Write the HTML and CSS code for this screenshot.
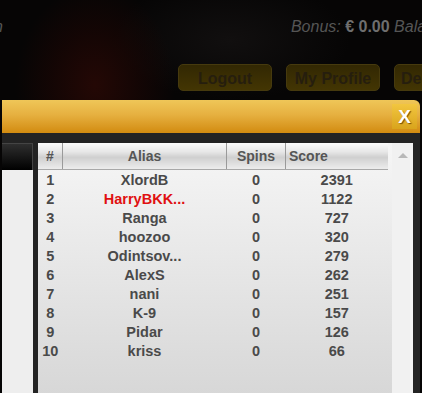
FILE: index.html
```html
<!DOCTYPE html>
<html lang="en">

<head>
  <meta charset="UTF-8">
  <meta name="viewport" content="width=device-width, initial-scale=1.0">
  <title>Leaderboard</title>
  <link rel="stylesheet" href="styles.css">
</head>

<body>
  <div class="top">
    <div class="account">
      <span class="welcome">n</span>
      <span class="bonus">Bonus: <b>€ 0.00</b> Balance: <b>€ 0.00</b></span>
    </div>
    <div class="nav">
      <a href="#" class="nav-btn">Logout</a>
      <a href="#" class="nav-btn">My Profile</a>
      <a href="#" class="nav-btn">Deposit</a>
    </div>
  </div>

  <div class="modal">
    <div class="modal-title">
      <a href="#" class="close">X</a>
    </div>
    <div class="modal-body">
      <div class="side">
        <div class="side-head"></div>
        <div class="side-list"></div>
      </div>
      <div class="board">
        <table class="scores">
          <thead>
            <tr>
              <th class="col-rank">#</th>
              <th class="col-alias">Alias</th>
              <th class="col-spins">Spins</th>
              <th class="col-score">Score</th>
            </tr>
          </thead>
          <tbody>
            <tr><td>1</td><td>XlordB</td><td>0</td><td>2391</td></tr>
            <tr class="me"><td>2</td><td>HarryBKK...</td><td>0</td><td>1122</td></tr>
            <tr><td>3</td><td>Ranga</td><td>0</td><td>727</td></tr>
            <tr><td>4</td><td>hoozoo</td><td>0</td><td>320</td></tr>
            <tr><td>5</td><td>Odintsov...</td><td>0</td><td>279</td></tr>
            <tr><td>6</td><td>AlexS</td><td>0</td><td>262</td></tr>
            <tr><td>7</td><td>nani</td><td>0</td><td>251</td></tr>
            <tr><td>8</td><td>K-9</td><td>0</td><td>157</td></tr>
            <tr><td>9</td><td>Pidar</td><td>0</td><td>126</td></tr>
            <tr><td>10</td><td>kriss</td><td>0</td><td>66</td></tr>
          </tbody>
        </table>
      </div>
      <div class="scrollbar">
        <div class="arrow-up"></div>
      </div>
    </div>
  </div>
</body>

</html>
```

FILE: styles.css
```css
body {
  margin: 0;
  width: 422px;
  height: 393px;
  overflow: hidden;
  font-family: "Liberation Sans", Arial, sans-serif;
  background-color: #060505;
}

.top {
  height: 100px;
  background:
    radial-gradient(ellipse 80px 100px at 95px 85px, #240805 0%, rgba(28, 6, 4, 0.6) 55%, rgba(0, 0, 0, 0) 100%),
    radial-gradient(ellipse 120px 60px at 230px 40px, #110f0f 0%, rgba(0, 0, 0, 0) 100%),
    #060505;
}

.account {
  display: flex;
  white-space: nowrap;
  padding-top: 18px;
  font-size: 16px;
  font-style: italic;
  color: #555;
}

.welcome {
  margin-left: -6px;
}

.bonus {
  margin-left: 288px;
}

.bonus b {
  font-style: normal;
  color: #6e6e6e;
}

.nav {
  display: flex;
  gap: 14px;
  margin-top: 28px;
  padding-left: 178px;
  white-space: nowrap;
}

.nav-btn {
  flex: none;
  width: 94px;
  height: 27px;
  line-height: 27px;
  box-sizing: border-box;
  text-align: center;
  border-radius: 5px;
  background: linear-gradient(#322803, #433503);
  border: 1px solid #463a0e;
  color: #261e0e;
  font-size: 16px;
  font-weight: bold;
  text-decoration: none;
}

.nav-btn:last-child {
  text-align: left;
  padding-left: 6px;
}

.modal {
  margin-left: 2px;
  width: 418px;
}

.modal-title {
  height: 33px;
  display: flex;
  justify-content: flex-end;
  align-items: center;
  padding-right: 3px;
  border-radius: 0 6px 0 0;
  background: linear-gradient(#efc658, #e6b040 45%, #d28b10);
}

.close {
  width: 25px;
  height: 25px;
  line-height: 25px;
  text-align: center;
  background: linear-gradient(#f2c640, #d9a41c);
  color: #fff;
  font-size: 19px;
  font-weight: bold;
  text-decoration: none;
  text-shadow: 1px 1px 1px #7a5000;
}

.modal-body {
  display: flex;
  height: 260px;
  padding: 10px 7px 0 0;
  background: #232323;
}

.side {
  width: 31px;
  display: flex;
  flex-direction: column;
}

.side-head {
  height: 27px;
  box-sizing: border-box;
  border-top: 1px solid #444;
  border-right: 1px solid #444;
  background: linear-gradient(#2e2e2e, #000);
}

.side-list {
  flex: 1;
  background: #eeeeee;
}

.board {
  width: 354px;
  margin-left: 5px;
  background: linear-gradient(#f6f6f6, #d6d6d6);
}

.scores {
  width: 350px;
  border-collapse: collapse;
  table-layout: fixed;
  font-weight: bold;
}

.scores th {
  height: 26px;
  padding: 0;
  border-bottom: 1px solid #a8a8a8;
  border-left: 1px solid #9a9a9a;
  background: linear-gradient(#fbfbfb, #e6e6e6 35%, #cfcfcf 55%, #ececec);
  color: #555;
  font-size: 14px;
}

.scores th:first-child {
  border-left: none;
}

.col-rank {
  width: 24px;
}

.col-alias {
  width: 163px;
}

.col-spins {
  width: 58px;
}

.col-score {
  text-align: left;
  padding-left: 3px !important;
}

.scores td {
  height: 19px;
  padding: 0;
  text-align: center;
  font-size: 14.5px;
  color: #4a4a4a;
}

.scores tr.me td:nth-child(2) {
  color: #e01010;
}

.scrollbar {
  flex: 1;
  background: #f1f1f1;
  padding-top: 10px;
}

.arrow-up {
  width: 0;
  height: 0;
  margin-left: 6px;
  border-left: 5px solid transparent;
  border-right: 5px solid transparent;
  border-bottom: 5px solid #b8b8b8;
}
```
